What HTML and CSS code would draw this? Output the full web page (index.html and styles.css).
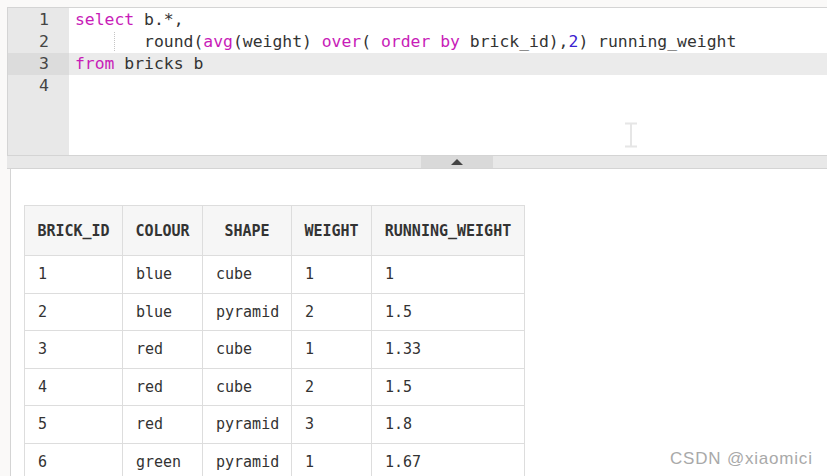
FILE: index.html
```html
<!DOCTYPE html>
<html>
<head>
<meta charset="utf-8">
<link rel="stylesheet" href="styles.css">
</head>
<body>
<div class="editor">
  <div class="gutter">
    <div class="ln">1</div>
    <div class="ln">2</div>
    <div class="ln active">3</div>
    <div class="ln">4</div>
  </div>
  <div class="code">
    <div class="line"><span class="kw">select</span> b.*,</div>
    <div class="line">    <span class="guide">   </span>round(<span class="kw">avg</span>(weight) <span class="kw">over</span>( <span class="kw">order</span> <span class="kw">by</span> brick_id),<span class="num">2</span>) running_weight</div>
    <div class="line active"><span class="kw">from</span> bricks b</div>
    <div class="line"> </div>
  </div>
</div>
<div class="splitter">
  <div class="handle"><span class="tri"></span></div>
</div>
<div class="results">
  <table class="grid">
    <colgroup>
      <col class="c-id"><col class="c-colour"><col class="c-shape"><col class="c-weight"><col class="c-running">
    </colgroup>
    <thead>
      <tr><th>BRICK_ID</th><th>COLOUR</th><th>SHAPE</th><th>WEIGHT</th><th>RUNNING_WEIGHT</th></tr>
    </thead>
    <tbody>
      <tr><td>1</td><td>blue</td><td>cube</td><td>1</td><td>1</td></tr>
      <tr><td>2</td><td>blue</td><td>pyramid</td><td>2</td><td>1.5</td></tr>
      <tr><td>3</td><td>red</td><td>cube</td><td>1</td><td>1.33</td></tr>
      <tr><td>4</td><td>red</td><td>cube</td><td>2</td><td>1.5</td></tr>
      <tr><td>5</td><td>red</td><td>pyramid</td><td>3</td><td>1.8</td></tr>
      <tr><td>6</td><td>green</td><td>pyramid</td><td>1</td><td>1.67</td></tr>
    </tbody>
  </table>
</div>
<svg class="ibeam" width="14" height="26" viewBox="0 0 14 26">
  <path d="M1 1.5 H13 M1 24.5 H13 M7 1.5 V24.5" stroke="#e6e6e6" stroke-width="2" fill="none"/>
</svg>
<div class="watermark">CSDN @xiaomici</div>
</body>
</html>
```

FILE: styles.css
```css
html, body {
  margin: 0;
  padding: 0;
}
body {
  background: #faf9f8;
  width: 827px;
  height: 476px;
  overflow: hidden;
  position: relative;
  display: flex;
  flex-direction: column;
  font-family: "DejaVu Sans Mono", "Liberation Mono", monospace;
  color: #333;
}
.editor {
  margin: 7px 0 0 7px;
  height: 147px;
  border: 1px solid #d4d4d4;
  border-right: none;
  background: #fff;
  display: flex;
  flex: none;
}
.gutter {
  width: 61px;
  background: #e8e8e8;
  padding-top: 1px;
  flex: none;
}
.ln {
  height: 22px;
  line-height: 22px;
  font-size: 16.5px;
  text-align: right;
  padding-right: 20px;
  color: #444;
}
.ln.active {
  background: #dcdcdc;
}
.code {
  flex: 1;
  min-width: 0;
  padding-top: 1px;
}
.line {
  height: 22px;
  line-height: 22px;
  font-size: 16.4px;
  padding-left: 6px;
  white-space: pre;
  color: #333;
}
.line.active {
  background: #ebebeb;
}
.kw {
  color: #c81cb8;
}
.num {
  color: #3a22cf;
}
.guide {
  background-image: linear-gradient(#c4c4c4 50%, transparent 50%);
  background-size: 1px 2px;
  background-repeat: repeat-y;
  background-position: left top;
}
.splitter {
  margin-left: 7px;
  height: 12px;
  background: #e8e8e8;
  border-bottom: 1px solid #d4d4d4;
  padding-left: 414px;
  display: flex;
  flex: none;
}
.handle {
  width: 72px;
  height: 12px;
  background: #d9d9d9;
  display: flex;
  align-items: center;
  justify-content: center;
}
.tri {
  width: 0;
  height: 0;
  border-left: 6px solid transparent;
  border-right: 6px solid transparent;
  border-bottom: 6px solid #444;
}
.results {
  margin-left: 10px;
  flex: 1;
  min-height: 0;
  overflow: hidden;
  background: #fff;
  border-left: 1px solid #d4d4d4;
  padding: 36px 0 0 13px;
}
.grid {
  border-collapse: collapse;
  table-layout: fixed;
  width: 500px;
  font-size: 15px;
  color: #333;
}
.c-id { width: 98px; }
.c-colour { width: 80px; }
.c-shape { width: 89px; }
.c-weight { width: 80px; }
.c-running { width: 153px; }
.grid th {
  height: 49px;
  padding: 0 10px;
  background: #f6f6f6;
  font-weight: bold;
  text-align: center;
  border: 1px solid #dddddd;
  white-space: nowrap;
}
.grid td {
  height: 36.5px;
  padding: 0 13px;
  text-align: left;
  border: 1px solid #dddddd;
  white-space: nowrap;
}
.ibeam {
  position: absolute;
  left: 624px;
  top: 122px;
}
.watermark {
  position: absolute;
  left: 670px;
  top: 449px;
  font-family: "Liberation Sans", Arial, sans-serif;
  font-size: 17px;
  letter-spacing: 0.8px;
  color: #a9a9a9;
  text-shadow: 0 0 1px #fff;
}
```
